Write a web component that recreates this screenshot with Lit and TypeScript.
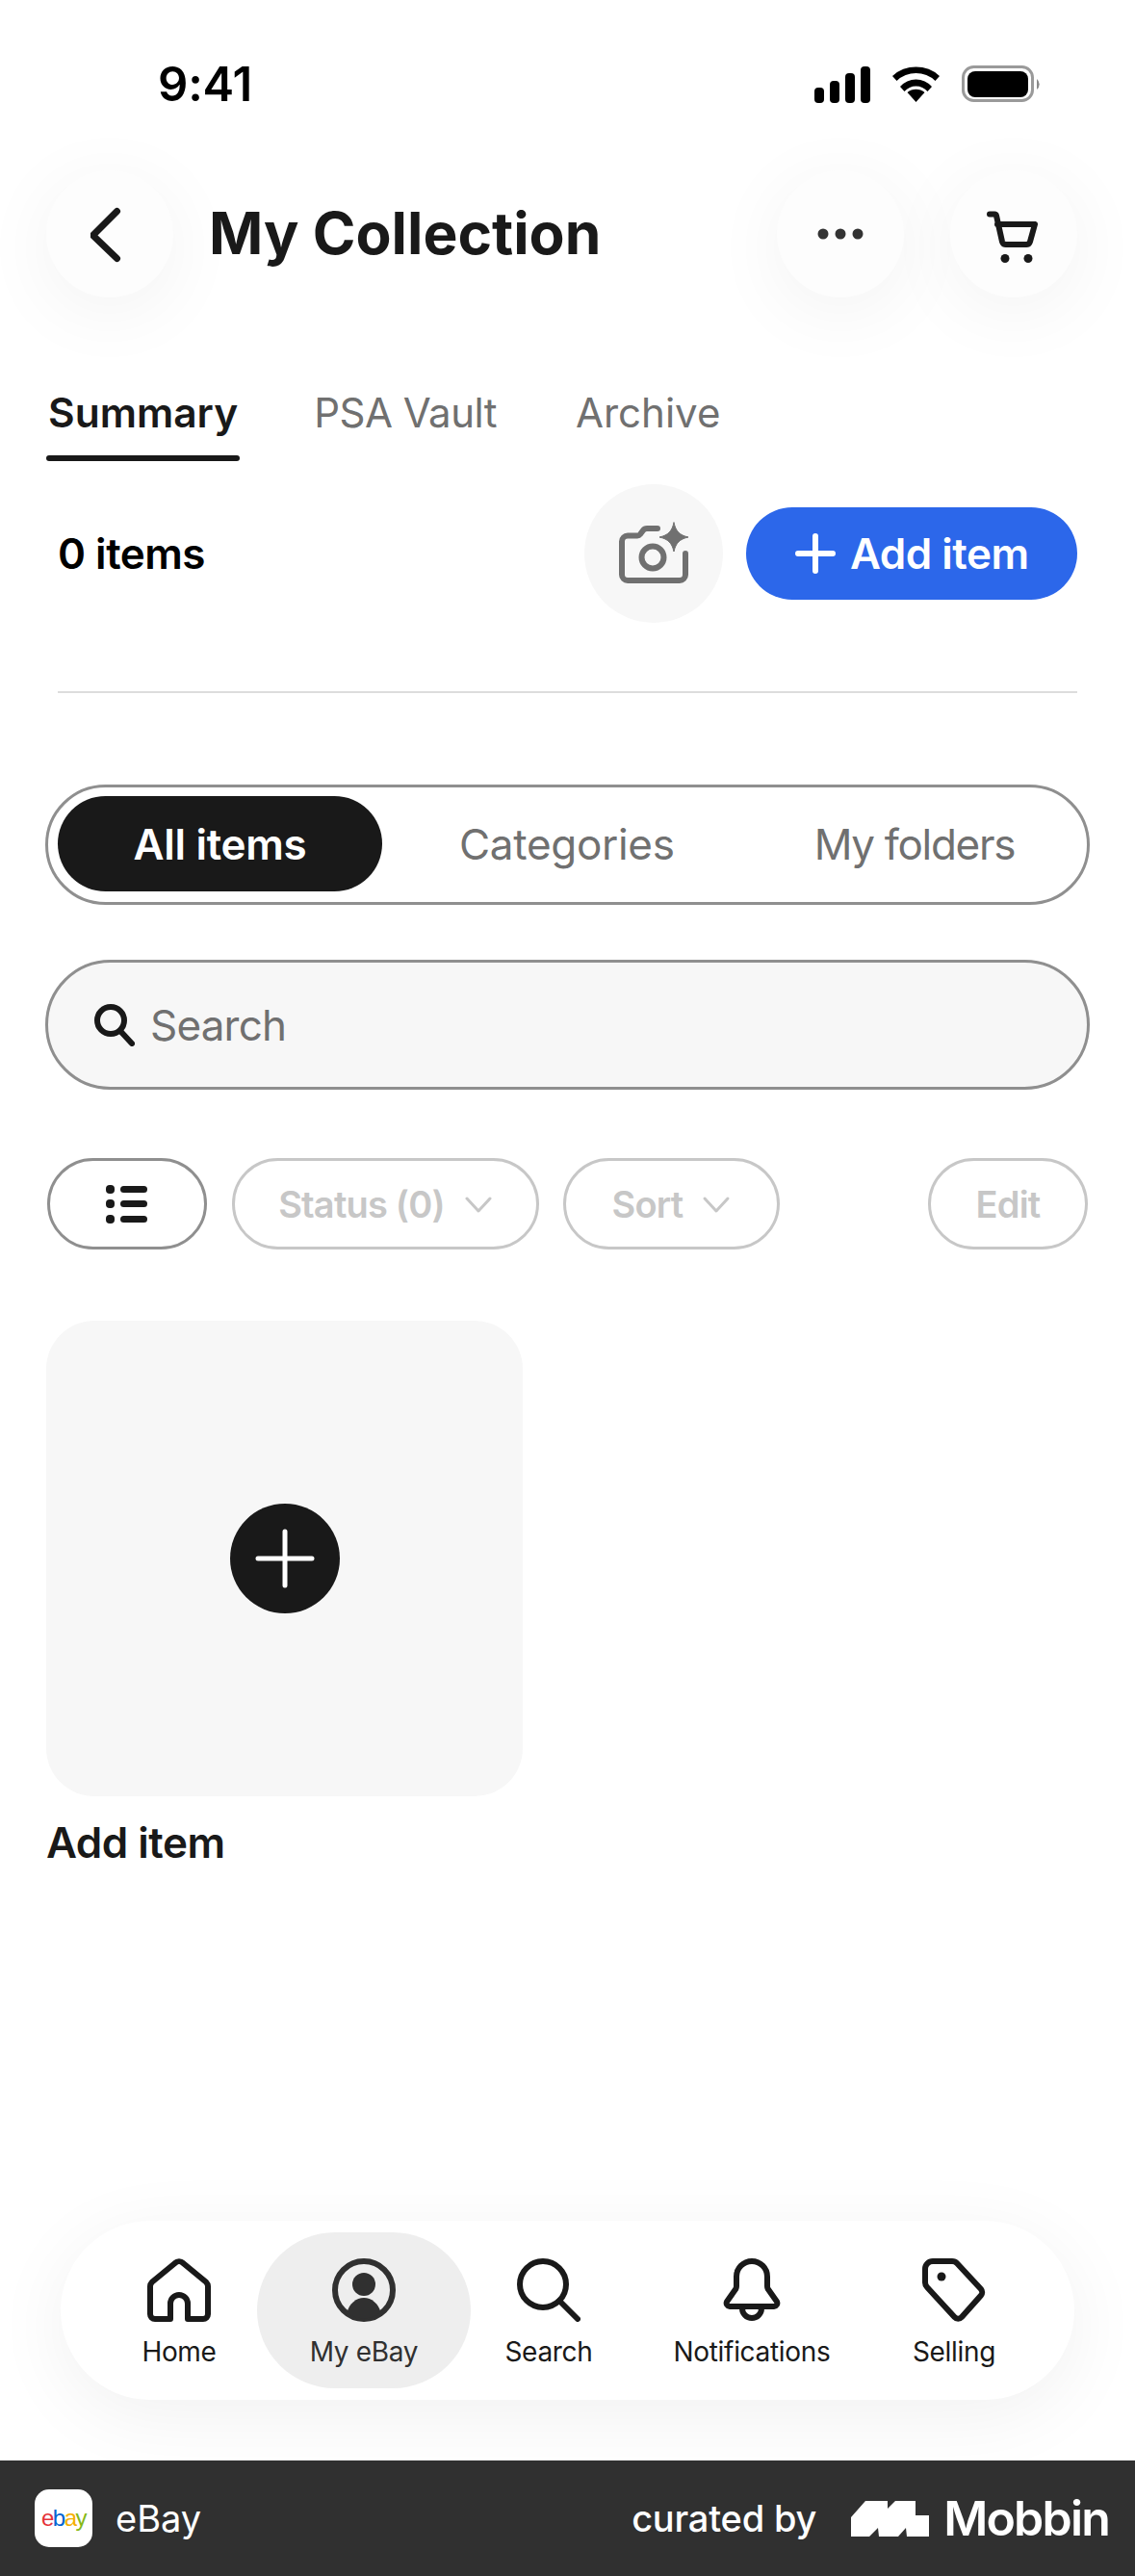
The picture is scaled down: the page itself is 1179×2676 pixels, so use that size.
import { LitElement, html, css, svg } from "lit";
import { customElement } from "lit/decorators.js";

const nav = [
  { label: "Home", w: 162, icon: svg`<path d="M24 63H8a5 5 0 0 1-5-5V29a6 6 0 0 1 1.800-4.200L28.800 5a6 6 0 0 1 8.400 0l24 19.800A6 6 0 0 1 63 29v29a5 5 0 0 1-5 5H42V47a9 9 0 0 0-18 0z"/>` },
  { label: "My eBay", w: 222, active: true, icon: svg`<circle cx="33" cy="33" r="30" stroke="#303030"/><circle cx="33" cy="27" r="12" fill="#303030" stroke="none"/><path d="M15.500 56C18 47 25 41 33 41s15 6 17.500 15a27 27 0 0 1-35 0z" fill="#303030" stroke="none"/>` },
  { label: "Search", w: 162, icon: svg`<circle cx="27" cy="27" r="24"/><path d="M44 44l19 19"/>` },
  { label: "Notifications", w: 260, icon: svg`<g transform="translate(3 0)"><path d="M30 3a16 16 0 0 0-16 16v10a6 6 0 0 1-.7 2.800L4 45A3.500 3.500 0 0 0 7 50h46a3.500 3.500 0 0 0 3-5L46.700 31.800a6 6 0 0 1-.7-2.800V19A16 16 0 0 0 30 3z"/><path d="M20 52a10 10 0 0 0 20 0"/></g>` },
  { label: "Selling", w: 160, icon: svg`<path d="M11 3H31a7 7 0 0 1 5.200 2.300L61 32a5 5 0 0 1 0 6.500L41 61a5 5 0 0 1-7.500 0L5 30a7 7 0 0 1-2-5V11a8 8 0 0 1 8-8z"/><circle cx="20" cy="19" r="4.500" fill="#191919" stroke="none"/>` },
];

@customElement("app-root")
export class AppRoot extends LitElement {
  static styles = css`
    :host { display: block; width: 1179px; height: 2676px; background: #fff; color: #191919; font-family: Inter, "Liberation Sans", sans-serif; overflow: hidden; }
    * { box-sizing: border-box; }
    .page { height: 2676px; display: flex; flex-direction: column; }
    .status { height: 177px; padding: 66px 97px 0 164px; display: flex; justify-content: space-between; align-items: flex-start; }
    .time { font-size: 49px; font-weight: 600; line-height: 44px; color: #000; letter-spacing: -.2px; }
    .status svg { display: block; }
    .header { display: flex; align-items: center; padding: 0 60px 0 48px; height: 131px; }
    .round { width: 132px; height: 132px; border-radius: 50%; background: #fdfdfd; box-shadow: 0 14px 80px rgba(0,0,0,.055); display: flex; align-items: center; justify-content: center; flex: none; }
    h1 { margin: 0 0 0 37px; flex: 1; font-size: 60.500px; font-weight: 700; line-height: 1; }
    .round + .round { margin-left: 48px; }
    .tabs { display: flex; gap: 79px; margin: 96px 0 0 50px; height: 78px; font-size: 42px; color: #707070; line-height: 50px; letter-spacing: -.5px; }
    .tab { position: relative; }
    .tab.on { color: #191919; font-weight: 600; font-size: 42.500px; letter-spacing: 0; }
    .tab.on::after { content: ""; position: absolute; left: -2px; right: -2px; top: 69px; height: 6px; background: #191919; border-radius: 3px; }
    .tab.last { margin-left: 3px; letter-spacing: 0; }
    .summary { display: flex; align-items: center; margin-top: 21px; padding: 0 60px; height: 144px; }
    .count { flex: 1; font-size: 44px; font-weight: 600; color: #000; letter-spacing: -.5px; }
    .cam { width: 144px; height: 144px; border-radius: 50%; background: #f7f7f7; display: flex; align-items: center; justify-content: center; }
    .add { margin-left: 24px; width: 344px; height: 96px; border-radius: 48px; background: #2c67ea; color: #fff; display: flex; align-items: center; font-size: 44px; font-weight: 600; padding-left: 51px; gap: 15px; letter-spacing: -.5px; }
    .rule { height: 2px; background: #ddd; margin: 71px 60px 0 60px; }
    .seg { margin: 95px 47px 0; height: 125px; border: 3px solid #8f8f8f; border-radius: 63px; display: flex; align-items: center; padding: 0 10px 2px; font-size: 44px; color: #707070; letter-spacing: -.3px; }
    .seg .pill { width: 337px; height: 99px; border-radius: 50px; background: #191919; color: #fff; font-weight: 600; display: flex; align-items: center; justify-content: center; flex: none; }
    .seg .mid { margin-left: 80px; }
    .seg .end { margin-left: 145px; letter-spacing: -1.300px; }
    .search { margin: 57px 47px 0; height: 135px; border: 3px solid #8f8f8f; border-radius: 68px; background: #f7f7f7; display: flex; align-items: center; padding-left: 48px; gap: 16px; font-size: 44px; color: #707070; letter-spacing: -.8px; }
    .chips { display: flex; align-items: center; margin: 71px 49px 0; height: 95px; font-size: 38px; font-weight: 600; color: #c7c7c7; letter-spacing: -.8px; }
    .chip { height: 95px; border: 3px solid #c7c7c7; border-radius: 48px; display: flex; align-items: center; justify-content: center; gap: 20px; margin-right: 25px; flex: none; }
    .chip.list { border-color: #8f8f8f; width: 166px; margin-right: 26px; }
    .chip.status-c { width: 319px; }
    .chip.sort { width: 225px; margin-right: auto; }
    .chip.edit { width: 166px; margin-right: 0; }
    .tile { margin: 74px 0 0 48px; width: 495px; height: 494px; border-radius: 50px; background: #f7f7f7; display: flex; align-items: center; justify-content: center; }
    .plus { width: 114px; height: 114px; border-radius: 50%; background: #191919; display: flex; align-items: center; justify-content: center; }
    .tile-label { margin: 22px 0 0 48px; font-size: 44px; font-weight: 600; line-height: 52px; letter-spacing: -.5px; }
    .spacer { flex: 1; }
    .nav { margin: 0 63px; height: 186px; border-radius: 93px; background: #fff; box-shadow: 0 16px 80px rgba(0,0,0,.06); display: flex; align-items: center; padding-left: 42px; }
    .item { height: 162px; border-radius: 81px; display: flex; flex-direction: column; align-items: center; padding-top: 27px; font-size: 28px; line-height: 34px; letter-spacing: -.3px; flex: none; }
    .item.on { background: #eee; color: #303030; }
    .item svg { display: block; fill: none; stroke: #191919; stroke-width: 6; stroke-linecap: round; stroke-linejoin: round; margin-bottom: 14px; }
    .foot { margin-top: 63px; height: 120px; background: #303030; color: #fff; display: flex; align-items: center; padding: 0 27px 0 36px; font-size: 38px; }
    .logo { width: 60px; height: 60px; border-radius: 15px; background: #fff; display: flex; align-items: center; justify-content: center; font-family: "Liberation Sans", sans-serif; font-size: 24px; letter-spacing: -1.500px; margin-right: 24px; }
    .e { color: #e53238; } .b { color: #0064d2; } .a { color: #f5af02; } .y { color: #86b817; }
    .curated { margin-left: auto; margin-right: 36px; font-weight: 500; letter-spacing: -.2px; }
    .mob { margin-left: 15px; font-size: 50px; font-weight: 600; letter-spacing: -1.800px; }
    .foot svg { display: block; flex: none; }
  `;

  render() {
    const chev = html`<svg width="30" height="20" viewBox="0 0 30 20" fill="none" stroke="#c7c7c7" stroke-width="3" stroke-linecap="round" stroke-linejoin="round"><path d="M3 4l12 13L27 4"/></svg>`;
    return html`<div class="page">
      <div class="status">
        <span class="time">9:41</span>
        <svg width="242" height="44" viewBox="0 0 242 44"><g fill="#000"><rect x="6" y="25" width="10" height="16" rx="4"/><rect x="22" y="18" width="10" height="23" rx="4"/><rect x="38" y="10" width="10" height="31" rx="4"/><rect x="54" y="3" width="10" height="38" rx="4"/><path d="M87 13a36 36 0 0 1 49 0l-4.500 5a29 29 0 0 0-40 0zM95 24a22 22 0 0 1 33 0l-4.500 5a16 16 0 0 0-24 0zM111.500 40l-9-10a14 14 0 0 1 18 0z"/><rect x="165" y="8" width="63" height="27" rx="8"/></g><rect x="160.500" y="3.500" width="72" height="35" rx="11" fill="none" stroke="#9a9a9a" stroke-width="3"/><path d="M237 16a7 7 0 0 1 0 11z" fill="#8a8a8a"/></svg>
      </div>
      <div class="header">
        <div class="round"><svg width="40" height="64" viewBox="0 0 40 64" fill="none" stroke="#191919" stroke-width="7" stroke-linecap="round" stroke-linejoin="round"><path d="M27.500 8.500L2.500 33.500l25 24"/></svg></div>
        <h1>My Collection</h1>
        <div class="round"><svg width="54" height="14" viewBox="0 0 54 14" fill="#333"><circle cx="9" cy="7" r="5.500"/><circle cx="27" cy="7" r="5.500"/><circle cx="45" cy="7" r="5.500"/></svg></div>
        <div class="round"><svg width="60" height="60" viewBox="0 0 60 60" fill="none" stroke="#191919" stroke-width="6" stroke-linecap="round" stroke-linejoin="round"><g transform="translate(2 0)"><path d="M3 9.500h5a2 2 0 0 1 2 1.500l6 27a4 4 0 0 0 4 3h21a4 4 0 0 0 4-3l5-18H11"/><circle cx="19" cy="55.500" r="4.500" fill="#191919" stroke="none"/><circle cx="43" cy="55.500" r="4.500" fill="#191919" stroke="none"/></g></svg></div>
      </div>
      <div class="tabs"><div class="tab on">Summary</div><div class="tab">PSA Vault</div><div class="tab last">Archive</div></div>
      <div class="summary">
        <div class="count">0 items</div>
        <div class="cam"><svg width="78" height="68" viewBox="0 0 78 68" fill="none" stroke="#707070" stroke-width="6" stroke-linecap="round" stroke-linejoin="round"><path d="M43 8H32a5 5 0 0 0-4 2l-3 4a4 4 0 0 1-3 1.500H12a6 6 0 0 0-6 6V56a6 6 0 0 0 6 6H66a6 6 0 0 0 6-6V34"/><circle cx="38" cy="38" r="11.500"/><path d="M60 2C62 11 66 15 75 17C66 19 62 23 60 32C58 23 54 19 45 17C54 15 58 11 60 2Z" fill="#707070" stroke-width="1"/></svg></div>
        <div class="add"><svg width="42" height="42" viewBox="0 0 42 42" fill="none" stroke="#fff" stroke-width="6" stroke-linecap="round"><path d="M21 3v36M3 21h36"/></svg>Add item</div>
      </div>
      <div class="rule"></div>
      <div class="seg"><div class="pill">All items</div><div class="mid">Categories</div><div class="end">My folders</div></div>
      <div class="search"><svg width="42" height="44" viewBox="0 0 42 44" fill="none" stroke="#191919" stroke-width="6" stroke-linecap="round"><circle cx="17" cy="17" r="14"/><path d="M27 28l12 13"/></svg>Search</div>
      <div class="chips">
        <div class="chip list"><svg width="44" height="40" viewBox="0 0 44 40" fill="#191919"><rect x="0" y="0" width="9" height="9" rx="4"/><rect x="15" y="1" width="28" height="7" rx="3.500"/><rect x="0" y="15" width="9" height="9" rx="4"/><rect x="15" y="16" width="28" height="7" rx="3.500"/><rect x="0" y="31" width="9" height="9" rx="4"/><rect x="15" y="32" width="28" height="7" rx="3.500"/></svg></div>
        <div class="chip status-c">Status (0) ${chev}</div>
        <div class="chip sort">Sort ${chev}</div>
        <div class="chip edit">Edit</div>
      </div>
      <div class="tile"><div class="plus"><svg width="62" height="62" viewBox="0 0 62 62" fill="none" stroke="#fff" stroke-width="5" stroke-linecap="round"><path d="M31 3v56M3 31h56"/></svg></div></div>
      <div class="tile-label">Add item</div>
      <div class="spacer"></div>
      <div class="nav">
        ${nav.map((n) => html`<div class="item ${n.active ? "on" : ""}" style="width:${n.w}px"><svg width="66" height="66" viewBox="0 0 66 66">${n.icon}</svg>${n.label}</div>`)}
      </div>
      <div class="foot">
        <div class="logo"><span class="e">e</span><span class="b">b</span><span class="a">a</span><span class="y">y</span></div>
        <span>eBay</span>
        <span class="curated">curated by</span>
        <svg width="81" height="37" viewBox="0 0 81 37" fill="#fff"><path d="M0 17L15 0H38V8L46 0H67V15H81V37H58L57 28L49 37H29L28 28L19 37H0z"/></svg>
        <span class="mob">Mobbin</span>
      </div>
    </div>`;
  }
}
